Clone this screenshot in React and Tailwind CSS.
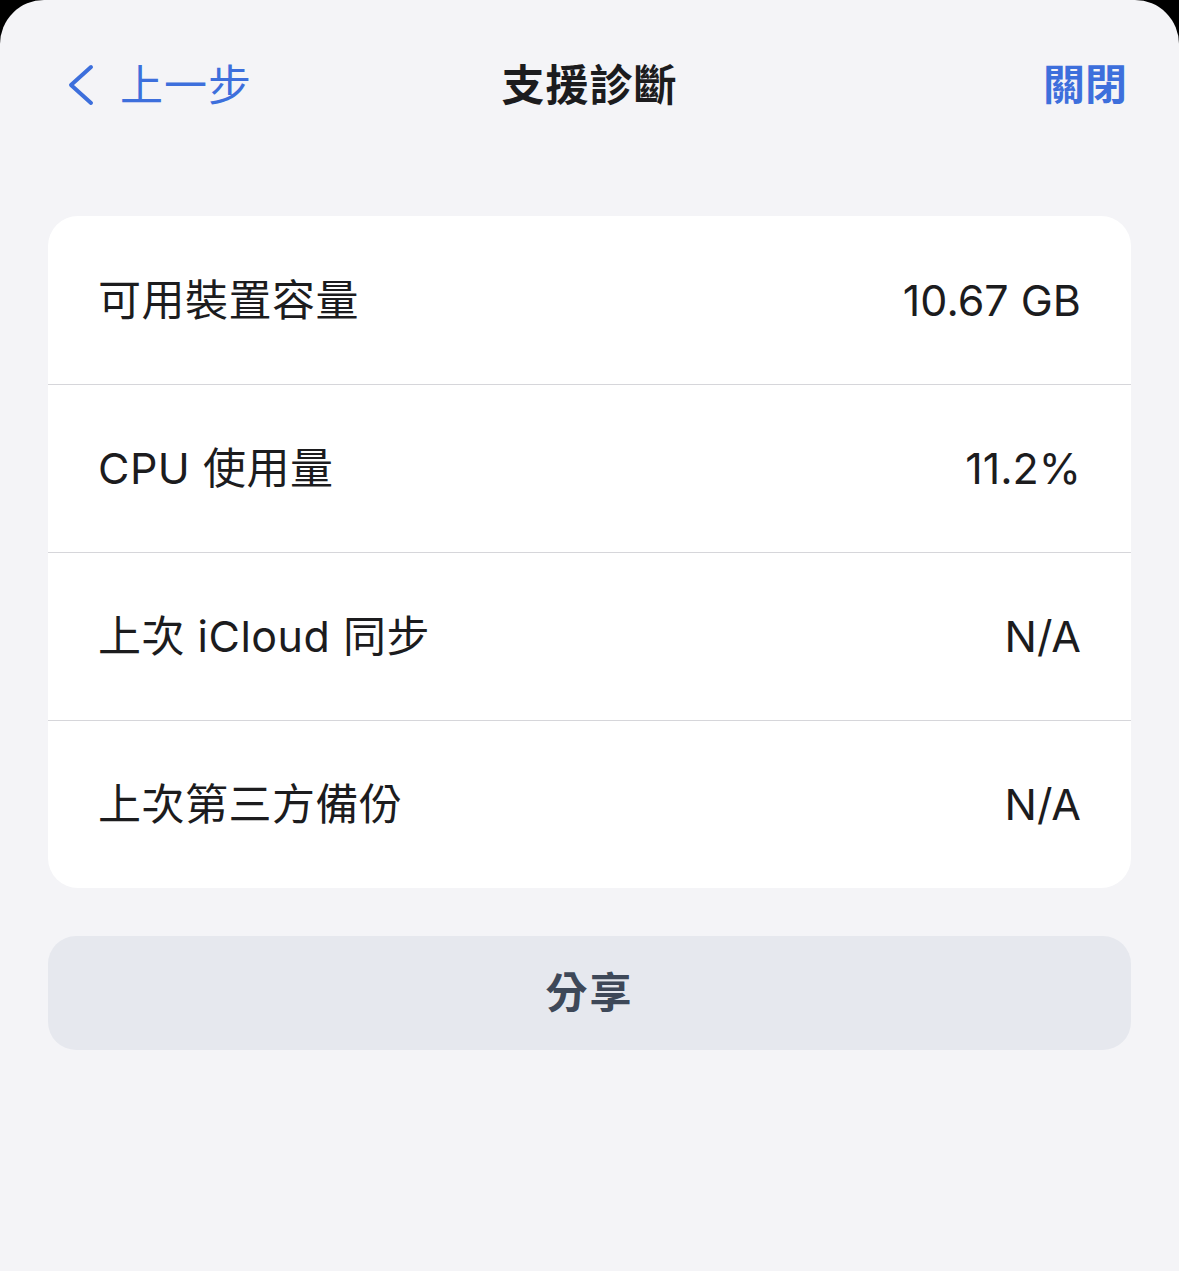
const FONT = { fontFamily: '"Inter", "Noto Sans CJK TC", sans-serif' };

const ROWS = [
  { label: '可用裝置容量', value: '10.67 GB' },
  { label: 'CPU 使用量', value: '11.2%' },
  { label: '上次 iCloud 同步', value: 'N/A' },
  { label: '上次第三方備份', value: 'N/A' },
];

function BackChevron() {
  return (
    <svg width="30" height="42" viewBox="0 0 30 42" fill="none">
      <polyline points="25,3 5,21 25,39" stroke="#3d6fdc" strokeWidth="4" strokeLinecap="round" strokeLinejoin="round" />
    </svg>
  );
}

export default function App() {
  return (
    <div className="bg-black w-[1179px] h-[1271px]" style={FONT}>
      <div className="bg-[#f4f4f7] h-full rounded-t-[44px] px-12">
        {/* Nav bar */}
        <div className="relative h-[170px] flex items-center justify-between -mx-12 px-[52px]">
          <div className="flex items-center gap-6 text-[#3d6fdc] text-[43px] leading-none pl-[14px]">
            <BackChevron />
            <span className="tracking-[1px]">上一步</span>
          </div>
          <div className="absolute left-1/2 -translate-x-1/2 text-[43px] font-bold text-[#1c1c1e] leading-none tracking-[1px]">
            支援診斷
          </div>
          <span className="text-[#3d6fdc] text-[42px] font-bold leading-none">關閉</span>
        </div>

        {/* Info card */}
        <div className="mt-[46px] bg-white rounded-[30px] overflow-hidden">
          {ROWS.map((r, i) => (
            <div key={i} className={`h-[168px] flex items-center justify-between px-[50px] ${i > 0 ? 'border-t border-[#d6d6da]' : ''}`}>
              <span className="text-[43px] text-[#1c1c1e] leading-none tracking-[0.5px]">{r.label}</span>
              <span className="text-[43px] text-[#1c1c1e] leading-none">{r.value}</span>
            </div>
          ))}
        </div>

        {/* Share button */}
        <div className="mt-[48px] h-[114px] rounded-[28px] bg-[#e6e8ee] flex items-center justify-center">
          <span className="text-[42px] font-bold text-[#3e4858] leading-none tracking-[2px]">分享</span>
        </div>
      </div>
    </div>
  );
}
